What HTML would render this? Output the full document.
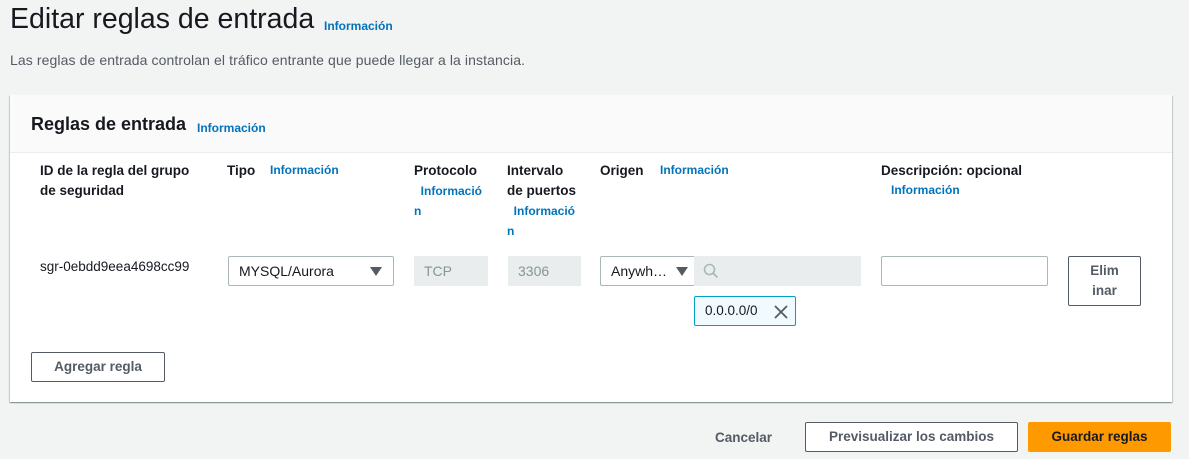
<!DOCTYPE html>
<html><head><meta charset="utf-8"><style>
*{box-sizing:border-box;margin:0;padding:0}
body{width:1189px;height:459px;background:#f2f3f3;font-family:"Liberation Sans",sans-serif;color:#16191f;position:relative;overflow:hidden;font-size:14px}
.a{position:absolute;white-space:nowrap}
.i{color:#0073bb;font-size:12px;font-weight:bold}
.b{font-weight:bold;font-size:13.5px}
.panel{position:absolute;left:10px;top:95px;width:1162px;height:307px;background:#fff;box-shadow:0 1px 1px rgba(0,28,36,.3),1px 1px 1px rgba(0,28,36,.15),-1px 1px 1px rgba(0,28,36,.15)}
.hdr{position:absolute;left:0;top:0;width:100%;height:58px;background:#fafafa;border-bottom:1px solid #eaeded}
.box{position:absolute;border:1px solid #aab7b8;border-radius:2px;background:#fff}
.dis{position:absolute;background:#eaeded;color:#879596;font-size:14px;padding:7px 10px}
.btn{position:absolute;border:1px solid #545b64;border-radius:2px;background:#fff;color:#545b64;font-weight:bold;font-size:13.5px;text-align:center}
.arr{position:absolute;width:0;height:0;border-left:6px solid transparent;border-right:6px solid transparent;border-top:9px solid #545b64}
</style></head><body>
<div class="a" style="left:10px;top:3px;font-size:28.5px;color:#16191f">Editar reglas de entrada</div>
<div class="a i" style="left:324px;top:19px">Información</div>
<div class="a" style="left:10px;top:52px;font-size:14px;color:#545b64;letter-spacing:0.1px">Las reglas de entrada controlan el tráfico entrante que puede llegar a la instancia.</div>
<div class="panel">
<div class="hdr"></div>
<div class="a" style="left:21px;top:19px;font-size:18px;font-weight:bold">Reglas de entrada</div>
<div class="a i" style="left:187px;top:26px">Información</div>
<div class="a b" style="left:30px;top:66px;line-height:20px">ID de la regla del grupo<br>de seguridad</div>
<div class="a b" style="left:217px;top:66px;line-height:20px">Tipo</div>
<div class="a i" style="left:260px;top:68px">Información</div>
<div class="a b" style="left:404px;top:66px;line-height:20px">Protocolo</div>
<div class="a i" style="left:404px;top:86px;line-height:20px">&nbsp; Informació<br>n</div>
<div class="a b" style="left:497px;top:66px;line-height:20px">Intervalo<br>de puertos</div>
<div class="a i" style="left:497px;top:106px;line-height:20px">&nbsp; Informació<br>n</div>
<div class="a b" style="left:590px;top:66px;line-height:20px">Origen</div>
<div class="a i" style="left:650px;top:68px">Información</div>
<div class="a b" style="left:871px;top:66px;line-height:20px">Descripción: opcional</div>
<div class="a i" style="left:881px;top:88px">Información</div>
<div class="a" style="left:30px;top:164px;font-size:13.5px">sgr-0ebdd9eea4698cc99</div>
<div class="box" style="left:218px;top:161px;width:166px;height:30px"><span class="a" style="left:10px;top:6px">MYSQL/Aurora</span><span class="arr" style="left:141px;top:10px"></span></div>
<div class="dis" style="left:404px;top:161px;width:74px;height:30px">TCP</div>
<div class="dis" style="left:498px;top:161px;width:73px;height:30px">3306</div>
<div class="box" style="left:590px;top:161px;width:95px;height:30px;border-right:none"><span class="a" style="left:10px;top:6px">Anywh…</span><span class="arr" style="left:75px;top:10px"></span></div>
<div class="a" style="left:684px;top:161px;width:167px;height:30px;background:#eaeded"><svg class="a" style="left:9px;top:7px" width="16" height="16" viewBox="0 0 16 16"><circle cx="6.5" cy="6.5" r="5" fill="none" stroke="#aab7b8" stroke-width="1.6"/><path d="M10 10l4.5 4.5" stroke="#aab7b8" stroke-width="1.6"/></svg></div>
<div class="a" style="left:684px;top:201px;width:102px;height:30px;border:1px solid #00a1c9;border-radius:2px;background:#f1faff"><span class="a" style="left:10px;top:6px;font-size:13.5px">0.0.0.0/0</span><svg class="a" style="left:79px;top:8px" width="14" height="14" viewBox="0 0 14 14"><path d="M1 1l12 12M13 1L1 13" stroke="#545b64" stroke-width="1.8"/></svg></div>
<div class="box" style="left:871px;top:161px;width:167px;height:30px"></div>
<div class="btn" style="left:1058px;top:161px;width:73px;height:50px;line-height:20px;padding-top:4px">Elim<br>inar</div>
<div class="btn" style="left:21px;top:257px;width:134px;height:30px;line-height:28px">Agregar regla</div>
</div>
<div class="a" style="left:715px;top:430px;font-weight:bold;font-size:13.5px;color:#545b64">Cancelar</div>
<div class="btn" style="left:805px;top:422px;width:213px;height:30px;line-height:28px">Previsualizar los cambios</div>
<div class="a" style="left:1028px;top:422px;width:143px;height:30px;background:#ff9900;border-radius:2px;font-weight:bold;font-size:13.5px;text-align:center;line-height:30px;color:#16191f">Guardar reglas</div>
</body></html>
